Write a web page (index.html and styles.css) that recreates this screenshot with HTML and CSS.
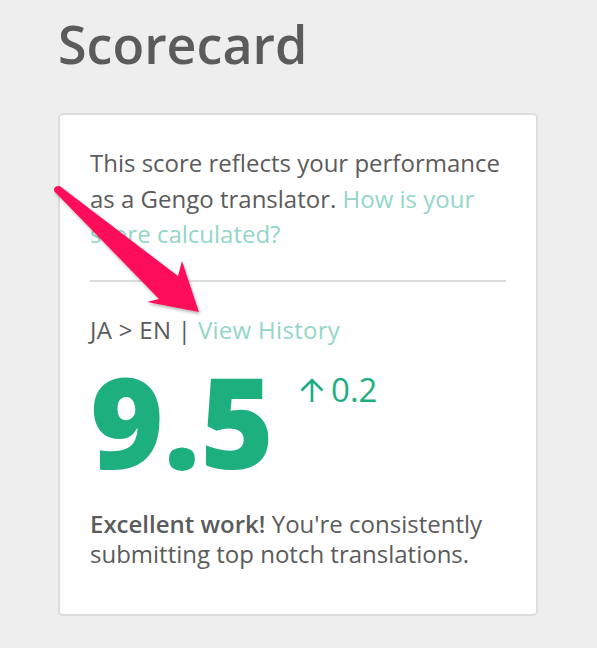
FILE: index.html
```html
<!DOCTYPE html>
<html lang="en">
<head>
  <meta charset="UTF-8">
  <meta name="viewport" content="width=device-width, initial-scale=1.0">
  <title>Scorecard</title>
  <link rel="stylesheet" href="styles.css">
</head>
<body>

  <div class="page">
    <h1 class="title">Scorecard</h1>

    <div class="card">
      <p class="intro">
        This score reflects your performance as a Gengo translator.
        <a href="#" class="link">How is your score calculated?</a>
      </p>

      <hr class="divider">

      <p class="pair">JA &gt; EN | <a href="#" class="link">View History</a></p>

      <div class="score-row">
        <span class="score">9.5</span>
        <span class="change">
          <svg class="up-icon" width="26" height="26" viewBox="0 0 26 26">
            <path d="M13 25 V3 M2.5 13.5 L13 3 L23.5 13.5" fill="none" stroke="#1eaf7f" stroke-width="2.6"/>
          </svg>0.2
        </span>
      </div>

      <p class="summary"><strong>Excellent work!</strong> You're consistently submitting top notch translations.</p>
    </div>
  </div>

  <!-- annotation arrow drawn over the card -->
  <svg class="pointer" width="597" height="648" viewBox="0 0 597 648">
    <defs>
      <filter id="shade" x="-20%" y="-20%" width="140%" height="140%">
        <feDropShadow dx="1" dy="2" stdDeviation="1.5" flood-color="#000" flood-opacity="0.3"/>
      </filter>
    </defs>
    <path d="M59 186 Q54 186 54 190 Q54 192 56 193 L159 299 L147 302 L199 312 L182 261 L178 276 L61 187 Q60 186 59 186 Z" fill="#fe0f5a" filter="url(#shade)"/>
  </svg>

</body>
</html>
```

FILE: styles.css
```css
* {
  box-sizing: border-box;
  margin: 0;
  padding: 0;
}

body {
  background: #eeeeee;
  font-family: "Open Sans", "Noto Sans", sans-serif;
  color: #5b5b5b;
}

.page {
  padding-left: 58px;
  width: 538px;
}

.title {
  font-size: 52px;
  font-weight: 600;
  line-height: 1;
  padding-top: 18px;
  height: 113px;
}

.card {
  background: white;
  border: 2px solid #dddddd;
  border-radius: 5px;
  padding: 30px 30px 0 30px;
  height: 503px;
}

.intro {
  font-size: 24px;
  line-height: 35.5px;
}

.link {
  color: #93d6c8;
  text-decoration: none;
}

.divider {
  border: none;
  border-top: 2px solid #dddddd;
  margin: 28px 0 30px 0;
}

.pair {
  font-size: 24px;
  line-height: 35.5px;
  letter-spacing: 0.3px;
}

.score-row {
  display: flex;
  align-items: flex-start;
  color: #1eaf7f;
  margin-top: 10px;
}

.score {
  font-size: 126px;
  font-weight: 800;
  line-height: 1;
}

.change {
  display: flex;
  align-items: center;
  gap: 6px;
  font-size: 33px;
  font-weight: 400;
  margin-left: 25px;
  margin-top: 10px;
}

.summary {
  font-size: 24px;
  line-height: 30px;
  margin-top: 26px;
}

.summary strong {
  font-weight: 600;
}

.pointer {
  position: absolute;
  left: 0;
  top: 0;
  pointer-events: none;
}
```
